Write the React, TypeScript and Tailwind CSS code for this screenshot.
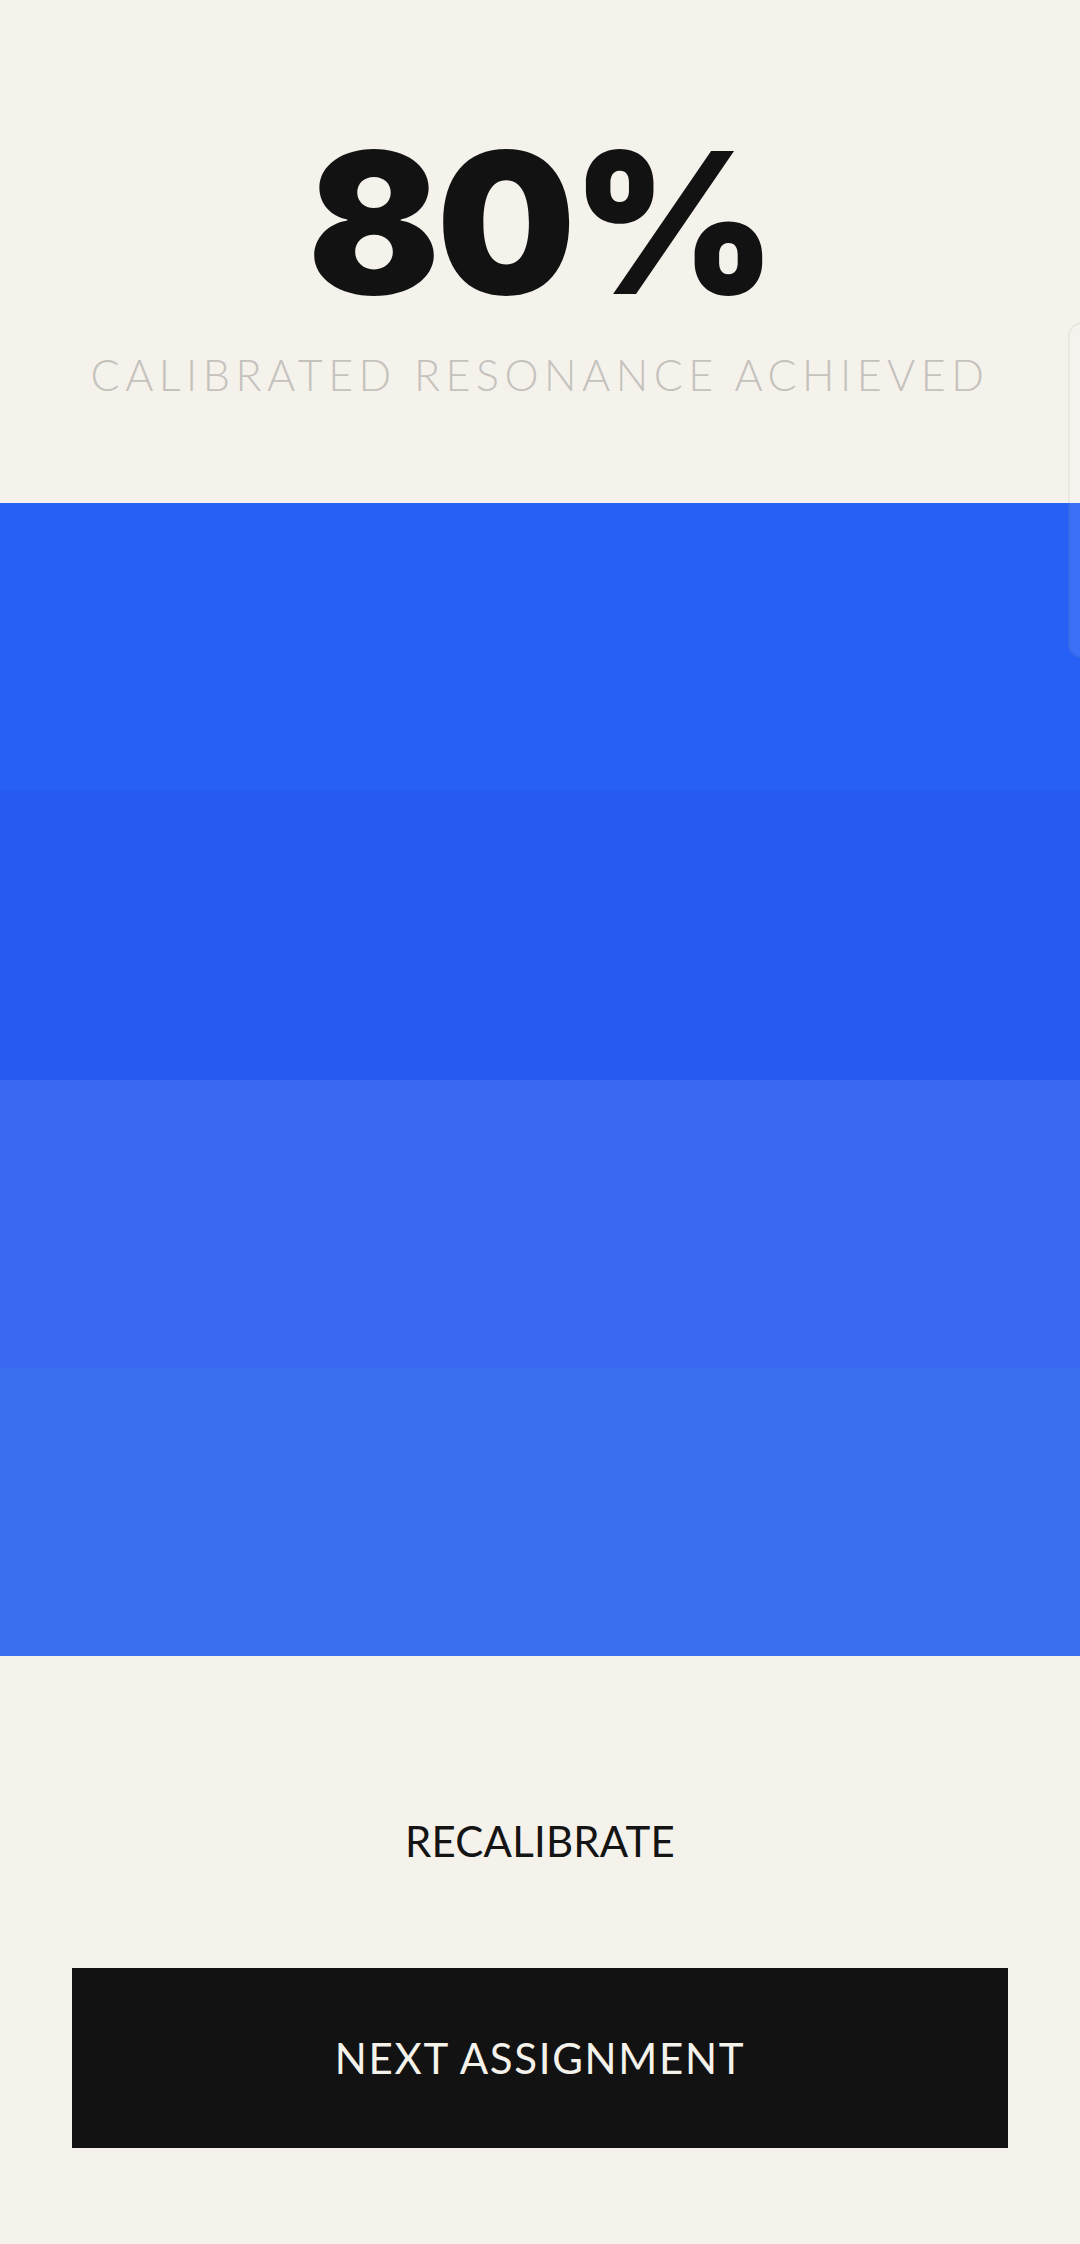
export default function App() {
  return (
    <div className="relative min-h-[2244px] w-full overflow-hidden bg-[#f5f2ec]">
      {/* score */}
      <section className="flex h-[503px] flex-col items-center pt-[125px]">
        <h1 className="font-['Inter',sans-serif] text-[196px] font-black leading-none tracking-[-4px] text-[#121212]">
          80%
        </h1>
        <p className="mt-[32px] font-['Lato',sans-serif] text-[43px] font-light leading-none tracking-[5.5px] text-[#c5c2bd]">
          CALIBRATED RESONANCE ACHIEVED
        </p>
      </section>

      {/* color bands */}
      <section className="flex flex-col">
        <div className="flex h-[577px] flex-col">
          <div className="h-[287px] bg-[#2660f5]" />
          <div className="h-[290px] bg-[#265bf1]" />
        </div>
        <div className="flex h-[576px] flex-col">
          <div className="h-[288px] bg-[#3b68f2]" />
          <div className="h-[288px] bg-[#3a6ff0]" />
        </div>
      </section>

      {/* actions */}
      <section className="flex flex-col items-center px-[72px] pt-[164px] pb-[96px]">
        <button className="font-['Lato',sans-serif] text-[42px] font-normal leading-none tracking-[0.2px] text-[#141414]">
          RECALIBRATE
        </button>
        <button className="mt-[106px] flex h-[180px] w-full items-center justify-center bg-[#121212] font-['Lato',sans-serif] text-[42px] font-normal leading-none tracking-[0.04em] text-[#f5f2ec]">
          NEXT ASSIGNMENT
        </button>
      </section>

      {/* peeking card at the right edge */}
      <div className="absolute left-[1068px] top-[322px] h-[336px] w-[40px] rounded-[14px] border-2 border-black/5 bg-white/10" />
    </div>
  );
}
